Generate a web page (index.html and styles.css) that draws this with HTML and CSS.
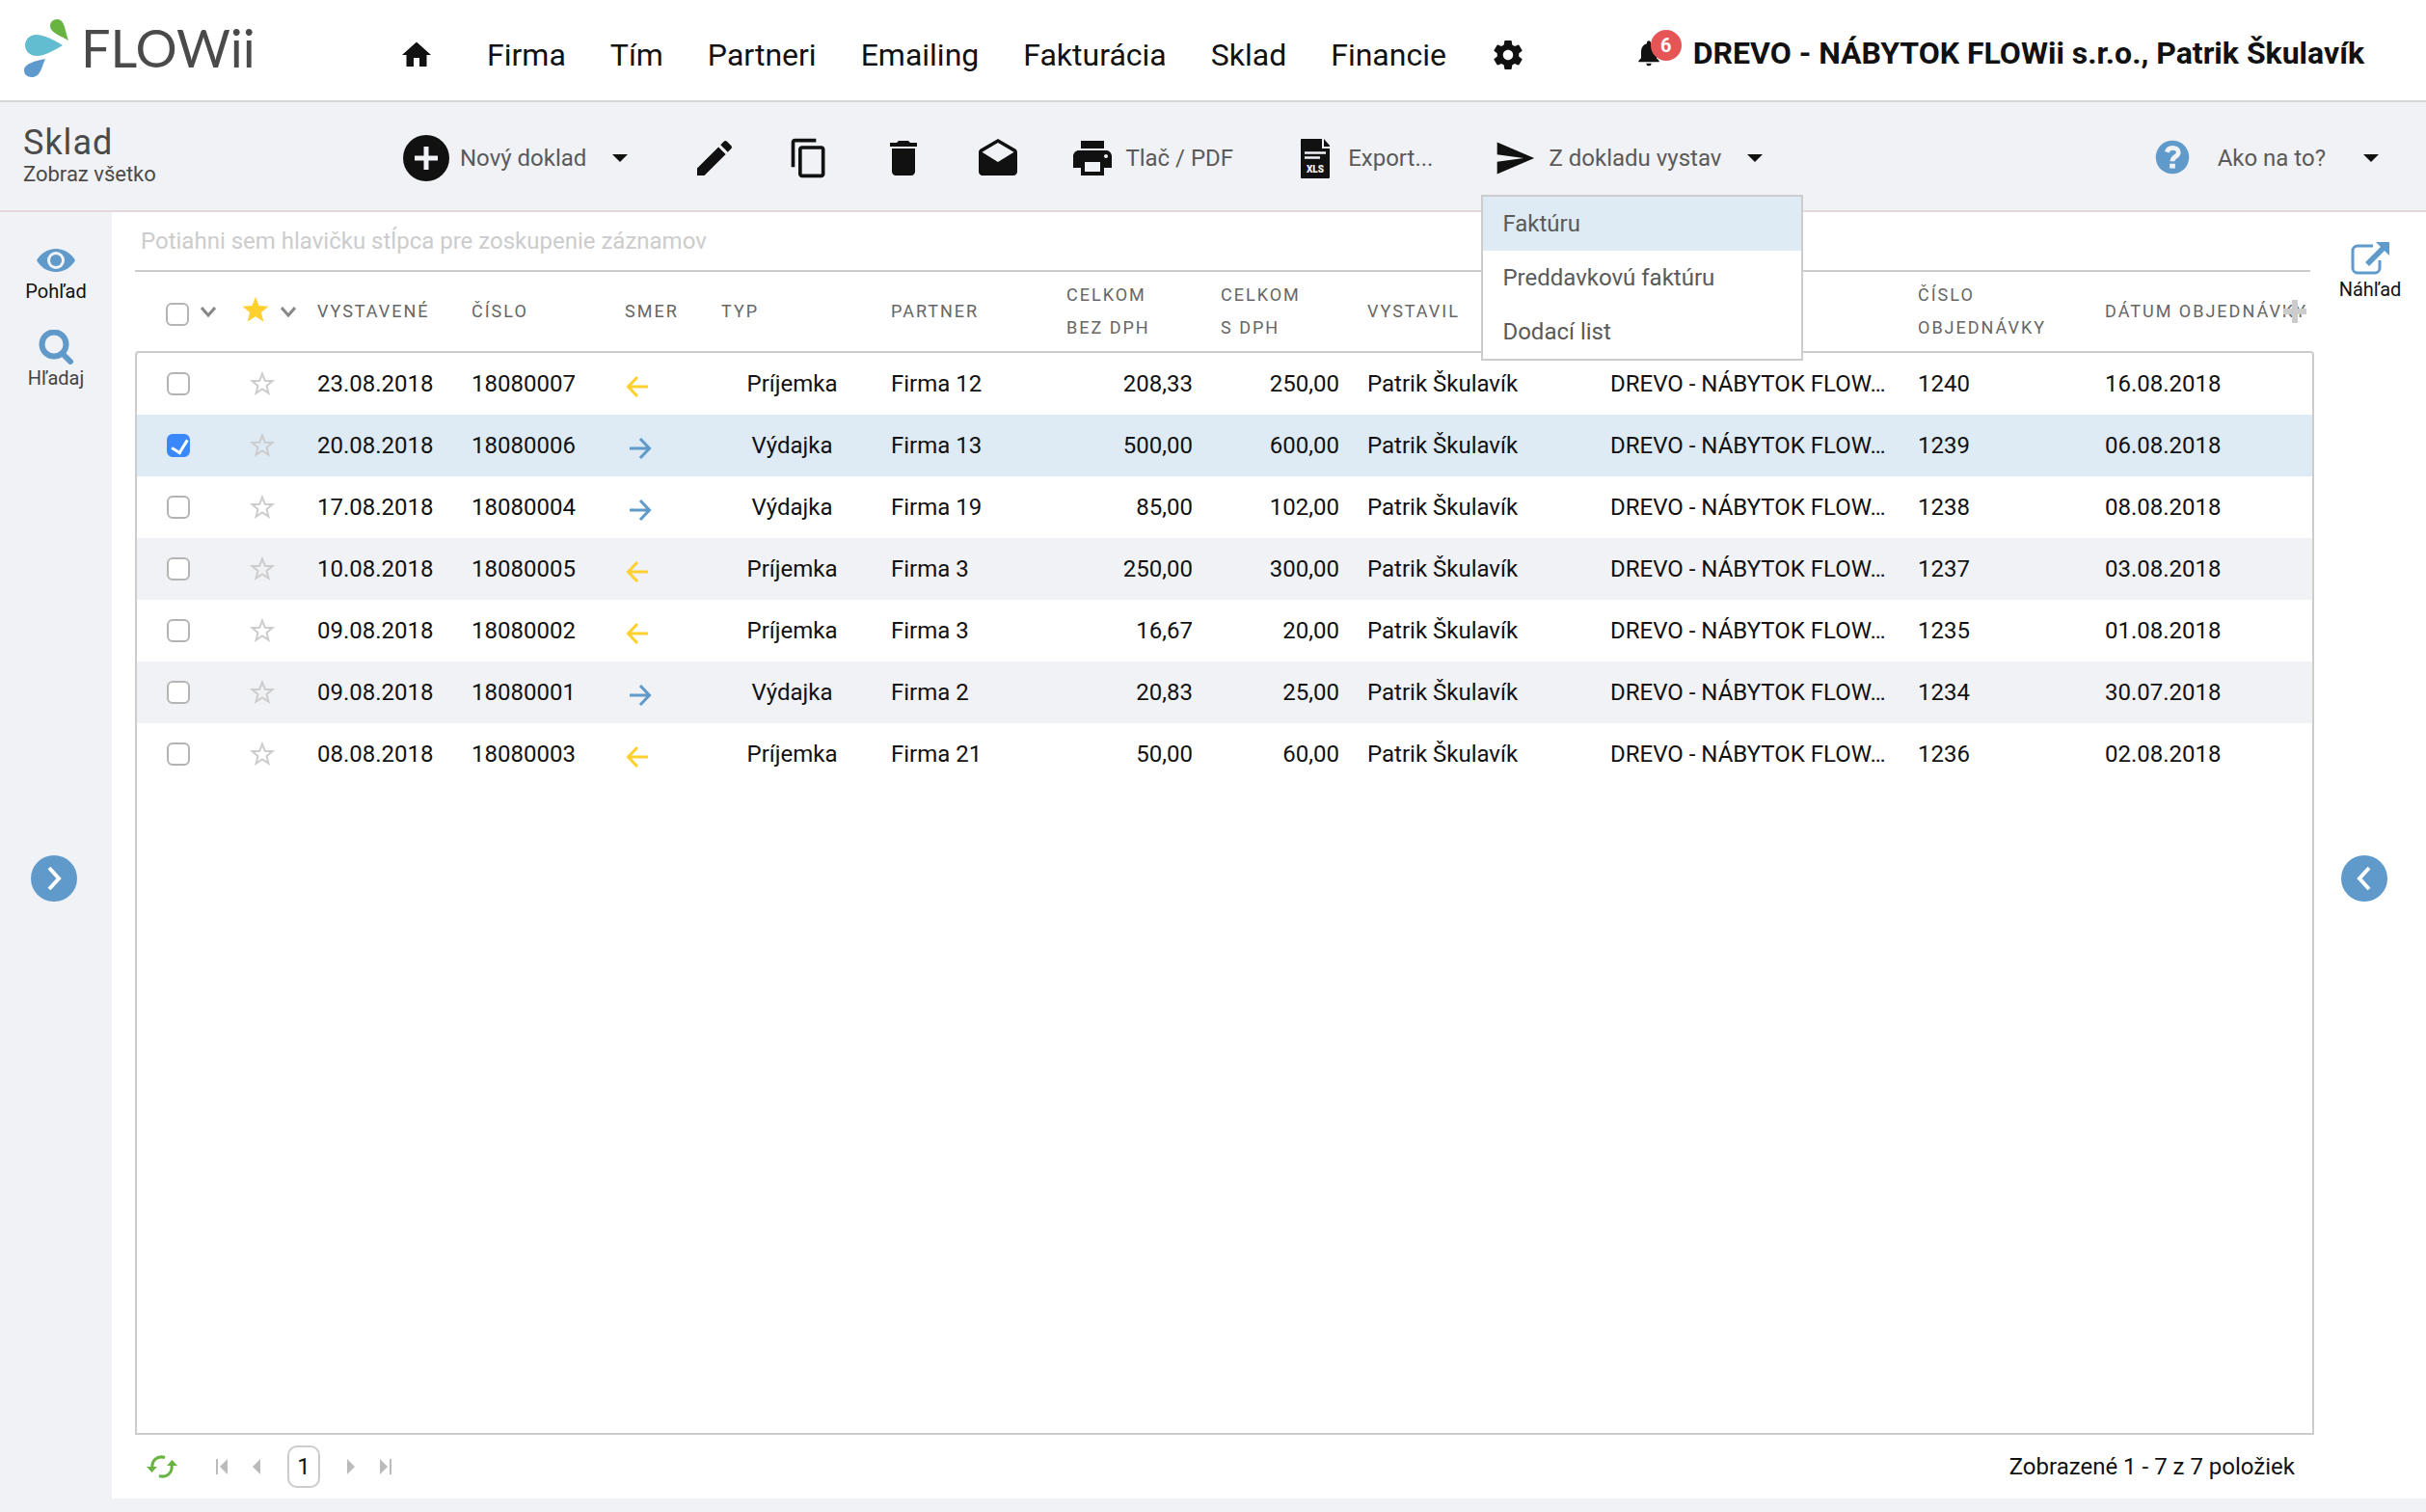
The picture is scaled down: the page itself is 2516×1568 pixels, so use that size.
FILE: index.html
```
<!DOCTYPE html>
<html lang="sk">
<head>
    <meta charset="UTF-8">
    <meta name="viewport" content="width=device-width, initial-scale=1.0">
    <title>Sklad - FLOWii</title>
    <link rel="stylesheet" href="styles.css">
</head>
<body>
    <svg class="sprite" aria-hidden="true">
        <symbol id="caret" viewBox="0 0 16 8"><path d="M0 0h16L8 8z"/></symbol>
        <symbol id="chevron" viewBox="0 0 16 12"><path d="M1 2l7 8 7-8" fill="none" stroke="currentColor" stroke-width="3"/></symbol>
        <symbol id="star" viewBox="0 0 26 26"><path d="M13 2.5l2.8 7.3 7.7.4-6 4.9 2 7.6-6.5-4.3-6.5 4.3 2-7.6-6-4.9 7.7-.4z" fill="none" stroke="currentColor" stroke-width="2"/></symbol>
        <symbol id="arrow-in" viewBox="0 0 28 24"><path d="M24 12H4M13 2L3.500 12l9.500 10" fill="none" stroke="currentColor" stroke-width="3"/></symbol>
        <symbol id="arrow-out" viewBox="0 0 28 24"><path d="M5 12h20M16 2l9.500 10L16 22" fill="none" stroke="currentColor" stroke-width="3"/></symbol>
    </svg>

    <header class="header">
        <a class="logo" href="#">
            <svg class="logo-mark" viewBox="0 0 48 60" aria-hidden="true">
                <path fill="#69b440" d="M47 22C39 17 28 14 28 7c0-4 3-7 7-7 8 0 8 10 12 22z"/>
                <path fill="#62bdd0" d="M41 27C31 33 22 38 14 38 7 38 2 33 2 27s5-11 11-11c9 0 18 5 28 11z"/>
                <path fill="#5f9ace" d="M23 41c-4 9-5 19-14 19-5 0-8-3-8-7 0-7 12-10 22-12z"/>
            </svg>
            <span>FLOWii</span>
        </a>
        <nav class="nav">
            <a class="home" href="#" aria-label="Domov"><svg viewBox="0 0 24 24"><path d="M10 20v-6h4v6h5v-8h3L12 3 2 12h3v8z"/></svg></a>
            <a href="#">Firma</a>
            <a href="#">Tím</a>
            <a href="#">Partneri</a>
            <a href="#">Emailing</a>
            <a href="#">Fakturácia</a>
            <a href="#">Sklad</a>
            <a href="#">Financie</a>
            <a href="#" aria-label="Nastavenia"><svg viewBox="0 0 24 24"><path d="M19.430 12.980c.04-.32.07-.64.07-.98s-.03-.66-.07-.98l2.110-1.650c.19-.15.24-.42.12-.64l-2-3.460c-.12-.22-.39-.3-.61-.22l-2.490 1c-.52-.4-1.080-.73-1.690-.98l-.38-2.650C14.460 2.180 14.250 2 14 2h-4c-.25 0-.46.18-.49.42l-.38 2.650c-.61.25-1.170.59-1.690.98l-2.490-1c-.23-.09-.49 0-.61.22l-2 3.460c-.13.22-.07.49.12.64l2.110 1.650c-.04.32-.07.65-.07.98s.03.66.07.98l-2.110 1.650c-.19.15-.24.42-.12.64l2 3.460c.12.22.39.3.61.22l2.490-1c.52.4 1.080.73 1.690.98l.38 2.650c.03.24.24.42.49.42h4c.25 0 .46-.18.49-.42l.38-2.650c.61-.25 1.170-.59 1.690-.98l2.490 1c.23.09.49 0 .61-.22l2-3.460c.12-.22.07-.49-.12-.64l-2.110-1.650zM12 15.500c-1.930 0-3.500-1.570-3.500-3.500s1.570-3.500 3.500-3.500 3.500 1.570 3.500 3.500-1.570 3.500-3.500 3.500z"/></svg></a>
        </nav>
        <div class="user">
            <button type="button" class="bell" aria-label="Upozornenia">
                <svg viewBox="0 0 24 24"><path d="M12 22c1.100 0 2-.9 2-2h-4c0 1.100.89 2 2 2zm6-6v-5c0-3.070-1.640-5.640-4.500-6.320V4c0-.83-.67-1.500-1.500-1.500s-1.500.67-1.500 1.500v.68C7.630 5.360 6 7.920 6 11v5l-2 2v1h16v-1l-2-2z"/></svg>
                <span class="badge">6</span>
            </button>
            <a href="#">DREVO - NÁBYTOK FLOWii s.r.o., Patrik Škulavík</a>
        </div>
    </header>

    <div class="toolbar">
        <div class="page-title">
            <h1>Sklad</h1>
            <p>Zobraz všetko</p>
        </div>
        <div class="tools">
            <button type="button" class="tool">
                <svg class="icon" viewBox="0 0 24 24"><circle cx="12" cy="12" r="12"/><path d="M12 6v12M6 12h12" stroke="#f1f2f6" stroke-width="2.500"/></svg>
                Nový doklad
                <span class="caret"><svg><use href="#caret"/></svg></span>
            </button>
            <button type="button" class="tool" aria-label="Upraviť"><svg class="icon" viewBox="0 0 24 24"><path d="M3 17.250V21h3.750L17.810 9.940l-3.750-3.750L3 17.250zM20.710 7.040c.39-.39.39-1.020 0-1.410l-2.340-2.340c-.39-.39-1.020-.39-1.410 0l-1.830 1.830 3.750 3.750 1.830-1.830z"/></svg></button>
            <button type="button" class="tool" aria-label="Kopírovať"><svg class="icon small" viewBox="0 0 24 24"><path d="M16 1H4c-1.100 0-2 .9-2 2v14h2V3h12V1zm3 4H8c-1.100 0-2 .9-2 2v14c0 1.100.9 2 2 2h11c1.100 0 2-.9 2-2V7c0-1.100-.9-2-2-2zm0 16H8V7h11v14z"/></svg></button>
            <button type="button" class="tool" aria-label="Vymazať"><svg class="icon" viewBox="0 0 24 24"><path d="M6 19c0 1.100.9 2 2 2h8c1.100 0 2-.9 2-2V7H6v12zM19 4h-3.500l-1-1h-5l-1 1H5v2h14V4z"/></svg></button>
            <button type="button" class="tool" aria-label="Poslať e-mailom"><svg class="icon" viewBox="0 0 24 24"><path d="M21.990 8c0-.72-.37-1.350-.94-1.700L12 1 2.950 6.300C2.380 6.650 2 7.280 2 8v10c0 1.100.9 2 2 2h16c1.100 0 2-.9 2-2l-.01-10zM12 13L3.740 7.840 12 3l8.260 4.840L12 13z" transform="translate(0 1)"/></svg></button>
            <button type="button" class="tool labelled">
                <svg class="icon" viewBox="0 0 24 24"><path d="M19 8H5c-1.660 0-3 1.340-3 3v6h4v4h12v-4h4v-6c0-1.660-1.340-3-3-3zm-3 11H8v-5h8v5zm3-7c-.55 0-1-.45-1-1s.45-1 1-1 1 .45 1 1-.45 1-1 1zm-1-9H6v4h12V3z"/></svg>
                Tlač / PDF
            </button>
            <button type="button" class="tool labelled">
                <svg class="icon" viewBox="0 0 48 48">
                    <path d="M10 4h21v10h8v30a1 1 0 0 1-1 1H10a1 1 0 0 1-1-1V5a1 1 0 0 1 1-1zM33 4l6 7v1h-6z"/>
                    <path d="M13 18.500h22M13 23.500h16" stroke="#f1f2f6" stroke-width="2.500"/>
                    <text x="24" y="39" text-anchor="middle" class="xls">XLS</text>
                </svg>
                Export...
            </button>
            <div class="dropdown">
                <button type="button" class="tool" aria-expanded="true">
                    <svg class="icon small" viewBox="0 0 24 24"><path d="M2.010 21L23 12 2.010 3 2 10l15 2-15 2z"/></svg>
                    Z dokladu vystav
                    <span class="caret"><svg><use href="#caret"/></svg></span>
                </button>
                <ul class="menu">
                    <li><a class="active" href="#">Faktúru</a></li>
                    <li><a href="#">Preddavkovú faktúru</a></li>
                    <li><a href="#">Dodací list</a></li>
                </ul>
            </div>
        </div>
        <button type="button" class="tool help">
            <svg class="icon" viewBox="0 0 50 50"><circle cx="25" cy="24" r="18" fill="#5f9acb"/><path d="M19 18.500c1-3.500 3.500-4.500 6-4.500 4 0 6.500 2 6.500 5 0 4.500-6.500 4-6.500 9.500" fill="none" stroke="#f1f2f6" stroke-width="5"/><path d="M22 31h6v5h-6z" fill="#f1f2f6"/></svg>
            Ako na to?
            <span class="caret"><svg><use href="#caret"/></svg></span>
        </button>
    </div>

    <div class="workspace">
        <aside class="side side-left">
            <div class="side-tools">
                <button type="button" class="side-tool">
                    <svg viewBox="0 0 40 36"><path d="M20 6c9 0 16 5 20 12-4 7-11 12-20 12S4 25 0 18C4 11 11 6 20 6z"/><circle cx="20" cy="18" r="9" fill="#f1f2f6"/><circle cx="20" cy="18" r="6"/></svg>
                    Pohľad
                </button>
                <button type="button" class="side-tool muted">
                    <svg viewBox="0 0 40 36"><circle cx="18" cy="15" r="12.500" fill="none" stroke="currentColor" stroke-width="6"/><path d="M27 25l8 8" stroke="currentColor" stroke-width="6" stroke-linecap="round"/></svg>
                    Hľadaj
                </button>
            </div>
            <button type="button" class="toggle" aria-label="Rozbaliť ľavý panel"><svg viewBox="0 0 48 48"><path d="M19 13l10 11-10 11" fill="none" stroke="#fff" stroke-width="4"/></svg></button>
        </aside>

        <main class="grid">
            <div class="group-hint">Potiahni sem hlavičku stĺpca pre zoskupenie záznamov</div>
            <div class="grid-head">
                <table>
                    <colgroup>
                        <col class="c-check"><col class="c-star"><col class="c-date"><col class="c-number"><col class="c-dir"><col class="c-type"><col class="c-partner"><col class="c-net"><col class="c-gross"><col class="c-author"><col class="c-company"><col class="c-order"><col class="c-order-date">
                    </colgroup>
                    <thead>
                        <tr>
                            <th><div class="head-tools"><input type="checkbox" aria-label="Označiť všetko"><svg class="chevron"><use href="#chevron"/></svg></div></th>
                            <th><div class="head-tools"><svg class="head-star" viewBox="0 0 28 26"><path d="M14 0l3.600 9.100 9.900.6-7.600 6.300 2.500 9.600L14 20.300l-8.400 5.300L8.100 16 .5 9.700l9.900-.6z"/></svg><svg class="chevron"><use href="#chevron"/></svg></div></th>
                            <th>Vystavené</th>
                            <th>Číslo</th>
                            <th>Smer</th>
                            <th>Typ</th>
                            <th>Partner</th>
                            <th>Celkom<br>bez DPH</th>
                            <th>Celkom<br>s DPH</th>
                            <th>Vystavil</th>
                            <th></th>
                            <th>Číslo<br>objednávky</th>
                            <th>Dátum objednávky</th>
                        </tr>
                    </thead>
                </table>
                <button type="button" class="add-column" aria-label="Pridať stĺpec"><svg viewBox="0 0 24 24"><path d="M12 0v24M0 12h24" stroke="currentColor" stroke-width="6"/></svg></button>
            </div>
            <div class="grid-body">
                <table>
                    <colgroup>
                        <col class="c-check"><col class="c-star"><col class="c-date"><col class="c-number"><col class="c-dir"><col class="c-type"><col class="c-partner"><col class="c-net"><col class="c-gross"><col class="c-author"><col class="c-company"><col class="c-order"><col class="c-order-date">
                    </colgroup>
                    <tbody>
                        <tr>
                            <td class="center"><input type="checkbox" aria-label="18080007"></td>
                            <td class="center"><svg class="star"><use href="#star"/></svg></td>
                            <td>23.08.2018</td><td>18080007</td>
                            <td><svg class="dir in"><use href="#arrow-in"/></svg></td>
                            <td class="center">Príjemka</td><td>Firma 12</td>
                            <td class="num">208,33</td><td class="num">250,00</td>
                            <td>Patrik Škulavík</td><td>DREVO - NÁBYTOK FLOW…</td><td>1240</td><td>16.08.2018</td>
                        </tr>
                        <tr class="selected">
                            <td class="center"><input type="checkbox" aria-label="18080006" checked></td>
                            <td class="center"><svg class="star"><use href="#star"/></svg></td>
                            <td>20.08.2018</td><td>18080006</td>
                            <td><svg class="dir out"><use href="#arrow-out"/></svg></td>
                            <td class="center">Výdajka</td><td>Firma 13</td>
                            <td class="num">500,00</td><td class="num">600,00</td>
                            <td>Patrik Škulavík</td><td>DREVO - NÁBYTOK FLOW…</td><td>1239</td><td>06.08.2018</td>
                        </tr>
                        <tr>
                            <td class="center"><input type="checkbox" aria-label="18080004"></td>
                            <td class="center"><svg class="star"><use href="#star"/></svg></td>
                            <td>17.08.2018</td><td>18080004</td>
                            <td><svg class="dir out"><use href="#arrow-out"/></svg></td>
                            <td class="center">Výdajka</td><td>Firma 19</td>
                            <td class="num">85,00</td><td class="num">102,00</td>
                            <td>Patrik Škulavík</td><td>DREVO - NÁBYTOK FLOW…</td><td>1238</td><td>08.08.2018</td>
                        </tr>
                        <tr>
                            <td class="center"><input type="checkbox" aria-label="18080005"></td>
                            <td class="center"><svg class="star"><use href="#star"/></svg></td>
                            <td>10.08.2018</td><td>18080005</td>
                            <td><svg class="dir in"><use href="#arrow-in"/></svg></td>
                            <td class="center">Príjemka</td><td>Firma 3</td>
                            <td class="num">250,00</td><td class="num">300,00</td>
                            <td>Patrik Škulavík</td><td>DREVO - NÁBYTOK FLOW…</td><td>1237</td><td>03.08.2018</td>
                        </tr>
                        <tr>
                            <td class="center"><input type="checkbox" aria-label="18080002"></td>
                            <td class="center"><svg class="star"><use href="#star"/></svg></td>
                            <td>09.08.2018</td><td>18080002</td>
                            <td><svg class="dir in"><use href="#arrow-in"/></svg></td>
                            <td class="center">Príjemka</td><td>Firma 3</td>
                            <td class="num">16,67</td><td class="num">20,00</td>
                            <td>Patrik Škulavík</td><td>DREVO - NÁBYTOK FLOW…</td><td>1235</td><td>01.08.2018</td>
                        </tr>
                        <tr>
                            <td class="center"><input type="checkbox" aria-label="18080001"></td>
                            <td class="center"><svg class="star"><use href="#star"/></svg></td>
                            <td>09.08.2018</td><td>18080001</td>
                            <td><svg class="dir out"><use href="#arrow-out"/></svg></td>
                            <td class="center">Výdajka</td><td>Firma 2</td>
                            <td class="num">20,83</td><td class="num">25,00</td>
                            <td>Patrik Škulavík</td><td>DREVO - NÁBYTOK FLOW…</td><td>1234</td><td>30.07.2018</td>
                        </tr>
                        <tr>
                            <td class="center"><input type="checkbox" aria-label="18080003"></td>
                            <td class="center"><svg class="star"><use href="#star"/></svg></td>
                            <td>08.08.2018</td><td>18080003</td>
                            <td><svg class="dir in"><use href="#arrow-in"/></svg></td>
                            <td class="center">Príjemka</td><td>Firma 21</td>
                            <td class="num">50,00</td><td class="num">60,00</td>
                            <td>Patrik Škulavík</td><td>DREVO - NÁBYTOK FLOW…</td><td>1236</td><td>02.08.2018</td>
                        </tr>
                    </tbody>
                </table>
            </div>
            <footer class="pager">
                <button type="button" class="refresh" aria-label="Obnoviť"><svg viewBox="0 0 32 26"><path d="M6 14C5 7 11 1 19 3.500M26 12c1 7-5 13-13 10.500" fill="none" stroke="currentColor" stroke-width="3"/><path d="M0 13h11l-5.500 6zM21 12h11l-5.500-6z"/></svg></button>
                <button type="button" aria-label="Prvá strana"><svg viewBox="0 0 12 16"><path d="M0 0h2v16H0zM12 0v16L4 8z"/></svg></button>
                <button type="button" aria-label="Predchádzajúca strana"><svg viewBox="0 0 12 16"><path d="M10 0v16L2 8z"/></svg></button>
                <button type="button" class="current">1</button>
                <button type="button" aria-label="Nasledujúca strana"><svg viewBox="0 0 12 16"><path d="M2 0v16l8-8z"/></svg></button>
                <button type="button" aria-label="Posledná strana"><svg viewBox="0 0 12 16"><path d="M0 0v16l8-8zM10 0h2v16h-2z"/></svg></button>
                <span class="pager-info">Zobrazené 1 - 7 z 7 položiek</span>
            </footer>
        </main>

        <aside class="side side-right">
            <div class="side-tools">
                <button type="button" class="side-tool">
                    <svg viewBox="0 0 40 36"><path d="M23 5H7a5 5 0 0 0-5 5v18a5 5 0 0 0 5 5h18a5 5 0 0 0 5-5v-8" fill="none" stroke="currentColor" stroke-width="3"/><path d="M26 1h14v14l-5-5-16 16-4-4L31 6z"/></svg>
                    Náhľad
                </button>
            </div>
            <button type="button" class="toggle" aria-label="Rozbaliť pravý panel"><svg viewBox="0 0 48 48"><path d="M29 13L19 24l10 11" fill="none" stroke="#fff" stroke-width="4"/></svg></button>
        </aside>
    </div>
</body>
</html>
```

FILE: styles.css
```
* {
    margin: 0;
    padding: 0;
    box-sizing: border-box;
}

body {
    display: flex;
    flex-direction: column;
    min-height: 100vh;
    padding-bottom: 14px;
    font-family: Roboto, "Liberation Sans", sans-serif;
    font-size: 24px;
    color: #111;
    background: #f1f2f6;
}

a {
    color: inherit;
    text-decoration: none;
}

button {
    font: inherit;
    color: inherit;
    background: none;
    border: 0;
    cursor: pointer;
}

svg {
    display: block;
    fill: currentColor;
}

.sprite {
    display: none;
}

/* Header */
.header {
    display: flex;
    align-items: center;
    height: 106px;
    padding: 0 64px 0 24px;
    background: #fff;
    border-bottom: 2px solid #d5d6d6;
}

.logo {
    display: flex;
    align-items: center;
    gap: 12px;
    width: 390px;
    padding-bottom: 4px;
    font-family: Lato, sans-serif;
    font-size: 54px;
    line-height: 60px;
    color: #4a4a4a;
}

.logo-mark {
    width: 48px;
    height: 60px;
}

.nav {
    display: flex;
    align-items: center;
    gap: 46px;
    padding-top: 10px;
    font-size: 32px;
}

.nav svg {
    width: 36px;
    height: 36px;
}

.nav .home {
    margin-right: 9px;
}

.user {
    display: flex;
    align-items: center;
    gap: 30px;
    margin-left: auto;
    padding-top: 6px;
    font-size: 32px;
    font-weight: 700;
}

.bell {
    position: relative;
}

.bell svg {
    width: 32px;
    height: 32px;
}

.badge {
    position: absolute;
    top: -8px;
    left: 18px;
    width: 32px;
    height: 32px;
    border-radius: 50%;
    background: #e55555;
    color: #fff;
    font-size: 20px;
    line-height: 32px;
    text-align: center;
}

/* Toolbar */
.toolbar {
    display: flex;
    align-items: center;
    height: 114px;
    padding: 4px 32px 0 24px;
    border-bottom: 2px solid #e5d8da;
}

.page-title {
    width: 393px;
    padding-bottom: 4px;
    color: #4a4a4a;
}

.page-title h1 {
    font-size: 36px;
    font-weight: 400;
    line-height: 38px;
    letter-spacing: 1px;
}

.page-title p {
    font-size: 22px;
    line-height: 28px;
}

.tools {
    display: flex;
    gap: 48px;
}

.tool {
    display: flex;
    align-items: center;
    gap: 10px;
    height: 50px;
    color: #5a5a5a;
    white-space: nowrap;
}

.tool.labelled {
    gap: 9px;
    padding-right: 12px;
}

.icon {
    width: 50px;
    height: 48px;
    color: #111;
}

.icon.small {
    height: 44px;
}

.xls {
    font-size: 10px;
    font-weight: 900;
    fill: #f1f2f6;
}

.caret {
    display: flex;
    justify-content: center;
    width: 50px;
    color: #111;
}

.caret svg {
    width: 16px;
    height: 8px;
}

.help {
    gap: 22px;
    margin-left: auto;
}

.dropdown {
    position: relative;
}

.menu {
    position: absolute;
    z-index: 10;
    top: 63px;
    left: -10px;
    width: 334px;
    list-style: none;
    background: #fff;
    border: 2px solid #ccc;
}

.menu a {
    display: block;
    padding: 0 20px;
    line-height: 56px;
    color: #5a5a5a;
}

.menu a.active {
    background: #deeaf4;
}

/* Side panels */
.workspace {
    display: flex;
    flex: 1;
    background: #fff;
}

.side {
    display: grid;
    grid-template-rows: 1fr 1fr;
    flex: 0 0 116px;
}

.side-left {
    background: #f1f2f6;
}

.side-tools {
    display: flex;
    flex-direction: column;
    align-items: center;
    gap: 28px;
    padding-top: 32px;
}

.side-right .side-tools {
    padding-top: 30px;
}

.side-tool {
    display: flex;
    flex-direction: column;
    align-items: center;
    gap: 2px;
    font-size: 20px;
    line-height: 24px;
}

.side-tool.muted {
    color: #444;
}

.side-tool svg {
    width: 40px;
    height: 36px;
    color: #5f9acb;
}

.toggle {
    width: 48px;
    height: 48px;
    margin-left: 32px;
    border-radius: 50%;
    background: #5f9acb;
}

.side-right .toggle {
    margin-left: 28px;
}

/* Grid */
.grid {
    display: flex;
    flex: 1;
    flex-direction: column;
    min-width: 0;
    padding-left: 24px;
}

.group-hint {
    padding-left: 6px;
    line-height: 60px;
    color: #ccc;
}

.grid-head {
    position: relative;
    padding: 0 2px;
}

.grid-head::before {
    content: '';
    display: block;
    height: 2px;
    margin: 0 2px 0 -2px;
    background: #ccc;
}

table {
    width: 100%;
    table-layout: fixed;
    border-collapse: collapse;
}

.c-check { width: 87px; }
.c-star { width: 86px; }
.c-date { width: 160px; }
.c-number { width: 159px; }
.c-dir { width: 100px; }
.c-type { width: 176px; }
.c-partner { width: 182px; }
.c-net { width: 160px; }
.c-gross { width: 152px; }
.c-author { width: 252px; }
.c-order { width: 194px; }
.c-order-date { width: 229px; }

th {
    height: 82px;
    padding: 7px 0 7px 14px;
    font-size: 18px;
    font-weight: 400;
    line-height: 34px;
    letter-spacing: 2px;
    text-align: left;
    text-transform: uppercase;
    white-space: nowrap;
    color: #666;
}

.head-tools {
    display: flex;
    align-items: center;
    gap: 12px;
    padding-left: 16px;
}

th + th .head-tools {
    padding-left: 8px;
}

.head-tools input {
    margin-top: 6px;
}

.chevron {
    width: 16px;
    height: 12px;
    color: #888;
}

.head-star {
    width: 28px;
    height: 26px;
    margin-bottom: 4px;
    color: #ffd02e;
}

.add-column {
    position: absolute;
    top: 31px;
    right: 8px;
    color: #ccc;
}

.add-column svg {
    width: 24px;
    height: 24px;
}

input[type="checkbox"] {
    display: block;
    flex: none;
    width: 24px;
    height: 24px;
    border: 2px solid #b4b4b4;
    border-radius: 6px;
    background: #fff;
    appearance: none;
}

td input[type="checkbox"] {
    margin: 0 auto;
}

input[type="checkbox"]:checked {
    border-color: #3b88fd;
    background: #3b88fd;
}

input[type="checkbox"]:checked::before {
    content: '';
    display: block;
    width: 8px;
    height: 14px;
    margin: 1px 6px;
    border: solid #fff;
    border-width: 0 3px 3px 0;
    transform: rotate(32deg);
}

.grid-body {
    flex: 1;
    border: 2px solid #ccc;
    border-radius: 4px 4px 0 0;
}

td {
    height: 64px;
    padding: 0 15px 0 14px;
    white-space: nowrap;
}

td.center {
    text-align: center;
}

td.num {
    text-align: right;
}

tbody tr:nth-child(2n+4) {
    background: #f1f2f6;
}

tbody tr.selected {
    background: #deeaf4;
}

.star {
    width: 26px;
    height: 26px;
    margin: 0 auto;
    color: #ccc;
}

.dir {
    width: 28px;
    height: 24px;
    margin-top: 6px;
}

.dir.in {
    color: #ffd02e;
}

.dir.out {
    color: #5f9acb;
}

/* Pager */
.pager {
    display: flex;
    align-items: center;
    height: 66px;
    padding: 0 20px 0 10px;
}

.pager button {
    display: flex;
    align-items: center;
    justify-content: center;
    width: 36px;
    height: 44px;
    color: #bbb;
}

.pager svg {
    width: 12px;
    height: 16px;
}

.pager .refresh {
    margin-right: 26px;
    color: #69b440;
}

.pager .refresh svg {
    width: 32px;
    height: 26px;
}

.pager .current {
    width: 34px;
    margin: 0 14px;
    border: 2px solid #ccc;
    border-radius: 10px;
    color: #111;
}

.pager-info {
    margin-left: auto;
}
```
